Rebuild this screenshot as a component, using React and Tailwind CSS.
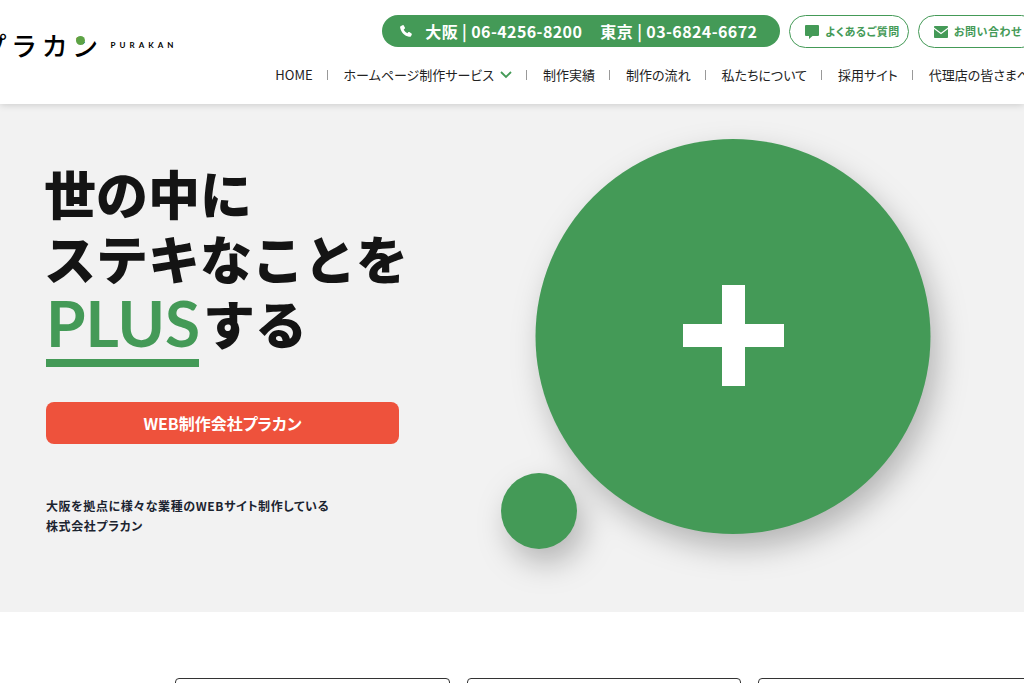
const navItems = [
  { label: 'HOME' },
  { label: 'ホームページ制作サービス', hasMenu: true },
  { label: '制作実績' },
  { label: '制作の流れ' },
  { label: '私たちについて' },
  { label: '採用サイト' },
  { label: '代理店の皆さまへ' },
]

const PhoneIcon = () => (
  <svg viewBox="0 0 12 12" className="w-3 h-3 fill-white" aria-hidden="true">
    <path d="M2.600.2 1 .9C.2 1.300 0 2 .2 3c.9 4.400 4.400 7.900 8.800 8.800 1 .2 1.700 0 2.100-.8l.7-1.600c.2-.4 0-.8-.3-1L9.300 7c-.4-.2-.8-.1-1.100.2l-.8 1C5.800 7.400 4.500 6.100 3.700 4.500l1-.8c.3-.3.400-.7.2-1.100L3.700.5C3.500.2 3 0 2.600.2Z" />
  </svg>
)

const CommentIcon = () => (
  <svg viewBox="0 0 14 14" className="w-[14px] h-[14px] fill-[#449a57]" aria-hidden="true">
    <path d="M1 0h12a1 1 0 0 1 1 1v9a1 1 0 0 1-1 1H7.500L4 14v-3H1a1 1 0 0 1-1-1V1a1 1 0 0 1 1-1Z" />
  </svg>
)

const MailIcon = () => (
  <svg viewBox="0 0 14 12" className="w-[14px] h-3 fill-[#449a57]" aria-hidden="true">
    <path d="M0 .8C0 .3.400 0 .8 0h12.400c.4 0 .8.300.8.800v.8L7 6.800 0 1.600Z" />
    <path d="M0 3l7 5.200L14 3v8.200c0 .5-.4.8-.8.8H.8c-.4 0-.8-.3-.8-.8Z" />
  </svg>
)

const Logo = () => (
  <a href="#" className="flex items-center h-9 mt-[27px] -ml-1 shrink-0">
    <span className="flex gap-[7px] text-[26px] leading-9 font-medium text-black">
      <span>プ</span>
      <span>ラ</span>
      <span>カ</span>
      <span className="relative">
        ン
        <span className="absolute left-[2px] top-[9px] w-[9px] h-[9px] rounded-full bg-[#5da345]" />
      </span>
    </span>
    <span className="ml-[14px] font-[Lato] text-[8px] leading-9 font-bold tracking-[4px] text-black">
      PURAKAN
    </span>
  </a>
)

const Header = () => (
  <header className="relative z-10 h-[104px] bg-white shadow-[0_0_8px_rgba(0,0,0,0.2)]">
    <div className="flex items-start justify-between -mx-[14px]">
      <Logo />
      <div className="flex flex-col items-end shrink-0 pt-[15px]">
        <div className="flex gap-[9px] whitespace-nowrap">
          <div className="flex items-center h-8 pl-[18px] pr-[23px] rounded-full bg-[#449a57] text-white text-base font-bold tracking-wide">
            <PhoneIcon />
            <a href="tel:06-4256-8200" className="ml-[13px]">
              大阪 | 06-4256-8200
            </a>
            <a href="tel:03-6824-6672" className="ml-[18px]">
              東京 | 03-6824-6672
            </a>
          </div>
          <a
            href="#"
            className="flex items-center gap-[6px] h-[33px] pl-[15px] pr-2 rounded-full border border-[#449a57] text-[#449a57] text-[11px] font-bold tracking-wider"
          >
            <CommentIcon />
            よくあるご質問
          </a>
          <a
            href="#"
            className="flex items-center gap-[6px] h-[33px] px-[15px] rounded-full border border-[#449a57] text-[#449a57] text-[11px] font-bold tracking-wider"
          >
            <MailIcon />
            お問い合わせ
          </a>
        </div>
        <nav className="mt-[17px] pr-2">
          <ul className="flex whitespace-nowrap text-[13px] leading-5 text-[#222]">
            {navItems.map((item, i) => (
              <li key={item.label} className="flex items-center">
                {i > 0 && <span className="w-px h-[10px] ml-[14px] mr-4 bg-[#999]" />}
                <a href="#" className="flex items-center gap-[6px]">
                  {item.label}
                  {item.hasMenu && (
                    <svg viewBox="0 0 12 8" className="w-3 h-2" fill="none" aria-hidden="true">
                      <path d="M1 1l5 5 5-5" stroke="#449a57" strokeWidth="1.800" />
                    </svg>
                  )}
                </a>
              </li>
            ))}
          </ul>
        </nav>
      </div>
    </div>
  </header>
)

const PlusCircles = () => (
  <svg
    viewBox="0 0 430 410"
    className="w-[430px] h-[410px] mt-[35px] shrink-0 overflow-visible"
    role="img"
    aria-label="プラス"
  >
    <g
      fill="#449a57"
      className="[filter:drop-shadow(7px_14px_15px_rgba(0,0,0,0.25))]"
    >
      <circle cx="232" cy="197.500" r="197.500" />
      <circle cx="38" cy="372" r="38" />
    </g>
    <path d="M221 146h23v39h39v23h-39v39h-23v-39h-39v-23h39Z" fill="#fff" />
  </svg>
)

const Hero = () => (
  <section className="flex justify-between h-[508px] pl-[46px] pr-[93px] bg-[#f2f2f2]">
    <div className="w-[353px] shrink-0 pt-14">
      <h1 className="-ml-[2px] whitespace-nowrap text-[52px] leading-[65px] font-black text-[#141414] [font-feature-settings:normal]">
        世の中に
        <br />
        ステキなことを
        <br />
        <span className="flex">
          <span className="w-[153px] h-[77px] ml-[2px] border-b-8 border-[#449a57] font-[Lato] text-[64px] font-bold text-[#449a57]">
            PLUS
          </span>
          <span className="ml-1">する</span>
        </span>
      </h1>
      <a
        href="#"
        className="flex items-center justify-center h-[42px] mt-[35px] rounded-lg bg-[#ee523c] text-white text-base font-bold"
      >
        WEB制作会社プラカン
      </a>
      <p className="mt-[52px] whitespace-nowrap text-xs leading-5 font-bold tracking-wider text-[#1c2430]">
        大阪を拠点に様々な業種のWEBサイト制作している
        <br />
        株式会社プラカン
      </p>
    </div>
    <PlusCircles />
  </section>
)

const App = () => {
  return (
    <div
      lang="ja"
      className="h-screen overflow-hidden bg-white font-['Noto_Sans_CJK_JP',sans-serif] [font-feature-settings:'palt']"
    >
      <Header />
      <main>
        <Hero />
        <section className="grid grid-cols-3 gap-[17px] mt-[66px] ml-[175px] -mr-[9px]">
          <div className="h-40 rounded border border-[#333]" />
          <div className="h-40 rounded border border-[#333]" />
          <div className="h-40 rounded border border-[#333]" />
        </section>
      </main>
    </div>
  )
}

export default App
